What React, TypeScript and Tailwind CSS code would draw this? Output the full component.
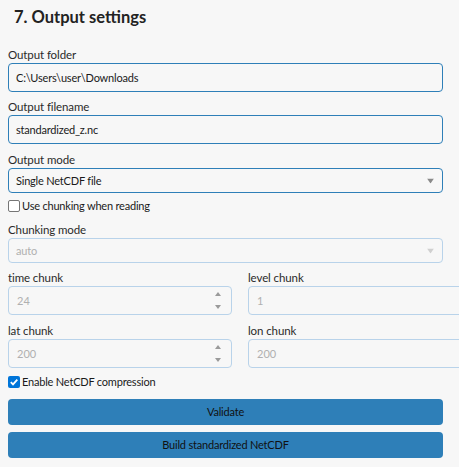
import React from "react";

const font = { fontFamily: 'Lato, "Noto Sans", sans-serif' };

function SelectArrow({ disabled }: { disabled?: boolean }) {
  return (
    <svg width="7" height="5" viewBox="0 0 7 5" className="absolute right-[8px] top-1/2 -translate-y-1/2">
      <path d="M0 0 L7 0 L3.5 5 Z" fill={disabled ? "#d0d0d0" : "#8a8a8a"} />
    </svg>
  );
}

function Spinner() {
  return (
    <div className="absolute right-[10px] top-0 bottom-0 flex flex-col justify-center gap-[9px]">
      <svg width="6" height="4" viewBox="0 0 6 4">
        <path d="M0 4 L6 4 L3 0 Z" fill="#9a9a9a" />
      </svg>
      <svg width="6" height="4" viewBox="0 0 6 4">
        <path d="M0 0 L6 0 L3 4 Z" fill="#9a9a9a" />
      </svg>
    </div>
  );
}

function Label({ children, className = "" }: { children: React.ReactNode; className?: string }) {
  return <div className={`h-[17px] text-[11.5px] leading-[17px] tracking-[-0.1px] text-[#2a2a2a] ${className}`}>{children}</div>;
}

function NumBox({ value, spinner }: { value: string; spinner?: boolean }) {
  return (
    <div className="relative h-[29px] w-[224px] shrink-0 rounded-[4px] border border-[#b9d3ea] bg-[#f7f7f7] pl-[8px] text-[11px] leading-[27px] text-[#b0b0b0]">
      {value}
      {spinner && <Spinner />}
    </div>
  );
}

const txt = "text-[11px] tracking-[-0.2px]";

export default function App() {
  return (
    <div className="h-[467px] w-[459px] overflow-hidden bg-[#f7f7f7] px-[8px]" style={font}>
      <div className="mt-[6px] h-[22px] pl-[6px] text-[16.5px] font-bold leading-[22px] text-[#222]">7. Output settings</div>

      <Label className="mt-[18px]">Output folder</Label>
      <div className={`h-[29px] w-[435px] rounded-[4px] border border-[#2e7fb8] pl-[7px] leading-[27px] text-[#1a1a1a] ${txt}`}>
        C:\Users\user\Downloads
      </div>

      <Label className="mt-[6px]">Output filename</Label>
      <div className={`h-[29px] w-[435px] rounded-[4px] border border-[#2e7fb8] pl-[7px] leading-[27px] text-[#1a1a1a] ${txt}`}>
        standardized_z.nc
      </div>

      <Label className="mt-[7px]">Output mode</Label>
      <div className={`relative h-[25px] w-[435px] rounded-[4px] border border-[#2e7fb8] pl-[7px] leading-[23px] text-[#1a1a1a] ${txt}`}>
        Single NetCDF file
        <SelectArrow />
      </div>

      <div className={`mt-[5px] flex h-[16px] items-center text-[#1a1a1a] ${txt}`}>
        <span className="mr-[2px] h-[12px] w-[12px] rounded-[2px] border border-[#767676] bg-white" />
        Use chunking when reading
      </div>

      <Label className="mt-[7px]">Chunking mode</Label>
      <div className={`relative h-[25px] w-[435px] rounded-[4px] border border-[#b9d3ea] pl-[7px] leading-[23px] text-[#b0b0b0] ${txt}`}>
        auto
        <SelectArrow disabled />
      </div>

      <div className="mt-[6px] flex gap-[16px]">
        <div className="flex flex-col">
          <Label>time chunk</Label>
          <NumBox value="24" spinner />
        </div>
        <div className="flex flex-col">
          <Label>level chunk</Label>
          <NumBox value="1" />
        </div>
      </div>

      <div className="mt-[7px] flex gap-[16px]">
        <div className="flex flex-col">
          <Label>lat chunk</Label>
          <NumBox value="200" spinner />
        </div>
        <div className="flex flex-col">
          <Label>lon chunk</Label>
          <NumBox value="200" />
        </div>
      </div>

      <div className={`mt-[6px] flex h-[16px] items-center text-[#1a1a1a] ${txt}`}>
        <span className="mr-[2px] flex h-[12px] w-[12px] items-center justify-center rounded-[2px] bg-[#0075d9]">
          <svg width="10" height="10" viewBox="0 0 10 10">
            <path d="M1.8 5.2 L4 7.4 L8.3 2.6" stroke="white" strokeWidth="1.8" fill="none" />
          </svg>
        </span>
        Enable NetCDF compression
      </div>

      <div className={`mt-[9px] flex h-[26px] w-[435px] items-center justify-center rounded-[4px] bg-[#2e7fb8] text-[#111] ${txt}`}>
        Validate
      </div>
      <div className={`mt-[7px] flex h-[26px] w-[435px] items-center justify-center rounded-[4px] bg-[#2e7fb8] text-[#111] ${txt}`}>
        Build standardized NetCDF
      </div>
    </div>
  );
}
